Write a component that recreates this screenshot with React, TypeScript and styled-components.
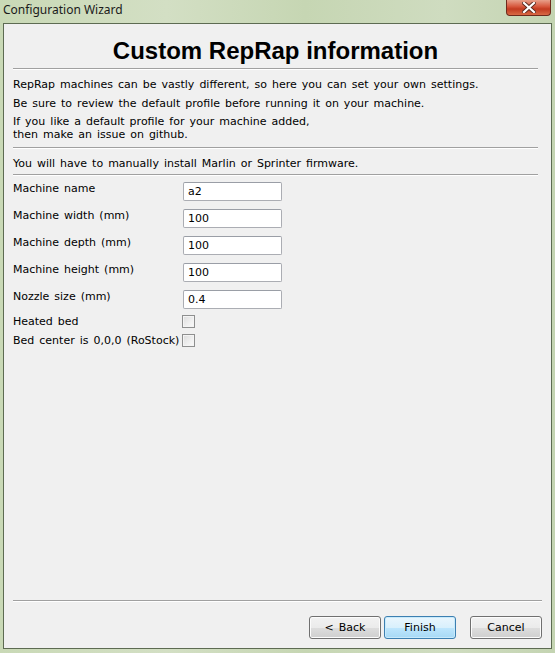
import React from 'react';
import styled, { createGlobalStyle } from 'styled-components';

const GlobalStyle = createGlobalStyle`
  html, body {
    margin: 0;
    padding: 0;
    width: 555px;
    height: 653px;
    overflow: hidden;
  }
  #root {
    width: 555px;
    height: 653px;
  }
`;

const uiFont = `"DejaVu Sans", Tahoma, sans-serif`;

const Window = styled.div`
  display: flex;
  flex-direction: column;
  width: 555px;
  height: 653px;
  box-sizing: border-box;
  background: linear-gradient(90deg, #c9d9b6 0%, #d3dfc4 30%, #c6d6b3 55%, #cfdcc0 80%, #c4d4b2 100%);
`;

const TitleBar = styled.div`
  display: flex;
  align-items: flex-start;
  justify-content: space-between;
  height: 23px;
  padding-left: 3px;
  flex-shrink: 0;
`;

const TitleText = styled.span`
  font-family: "Noto Sans", "Open Sans", sans-serif;
  font-size: 12px;
  line-height: 20px;
  color: #1a1a1a;
`;

const CloseButton = styled.div`
  display: flex;
  align-items: center;
  justify-content: center;
  width: 45px;
  height: 16px;
  margin-right: 4px;
  border: 1px solid #6e2a1c;
  border-top: none;
  border-radius: 0 0 4px 4px;
  background: linear-gradient(180deg, #e8a08a 0%, #d6553a 45%, #c23b20 60%, #d86a45 100%);
  box-sizing: border-box;
`;

const Client = styled.div`
  flex: 1;
  display: flex;
  flex-direction: column;
  margin: 0 3px 4px 3px;
  border: 1px solid #5d6b52;
  background: #f0f0f0;
  font-family: ${uiFont};
  font-size: 11px;
  word-spacing: 1.5px;
  color: #000;
`;

const Content = styled.div`
  flex: 1;
  display: flex;
  flex-direction: column;
  padding: 0 13px 0 9px;
`;

const Heading = styled.h1`
  margin: 0;
  padding-top: 12px;
  height: 32px;
  text-align: center;
  font-family: "Liberation Sans", Arial, sans-serif;
  font-weight: bold;
  font-size: 24px;
  line-height: 30px;
  word-spacing: normal;
`;

const Separator = styled.div<{ $space?: number }>`
  height: 0;
  border-top: 1px solid #a0a0a0;
  border-bottom: 1px solid #ffffff;
  margin: ${(p) => p.$space ?? 4}px 0;
`;

const Para = styled.p<{ $top?: number }>`
  margin: ${(p) => p.$top ?? 0}px 0 0 0;
  line-height: 13px;
  white-space: nowrap;
`;

const Form = styled.div`
  display: flex;
  flex-direction: column;
  padding-top: 2px;
`;

const FieldRow = styled.div<{ $gap: number }>`
  display: grid;
  grid-template-columns: 170px 99px;
  align-items: start;
  margin-bottom: ${(p) => p.$gap}px;
`;

const Label = styled.label`
  line-height: 13px;
  white-space: nowrap;
`;

const TextBox = styled.input`
  box-sizing: border-box;
  width: 99px;
  height: 19px;
  margin: 0;
  padding: 0 4px;
  border: 1px solid #abadb3;
  border-top-color: #9a9ea6;
  border-radius: 2px;
  background: #ffffff;
  font-family: ${uiFont};
  font-size: 11px;
  color: #000;
  outline: none;
`;

const CheckBox = styled.span`
  display: block;
  box-sizing: border-box;
  width: 13px;
  height: 13px;
  margin-left: -1px;
  border: 1px solid #8e8f8f;
  background: linear-gradient(135deg, #dcdcdc 0%, #f0f0f0 60%, #fafafa 100%);
  box-shadow: inset 0 0 0 1px #f4f4f4;
`;

const Footer = styled.div`
  display: flex;
  flex-direction: column;
  padding: 0 9px 9px 9px;
`;

const ButtonRow = styled.div`
  display: flex;
  justify-content: flex-end;
  padding-top: 14px;
`;

const Button = styled.button<{ $primary?: boolean; $gap?: number }>`
  box-sizing: border-box;
  width: 72px;
  height: 23px;
  margin-left: ${(p) => p.$gap ?? 0}px;
  padding: 0;
  border: 1px solid ${(p) => (p.$primary ? '#3c7fb1' : '#707070')};
  border-radius: 3px;
  background: ${(p) =>
    p.$primary
      ? 'linear-gradient(180deg, #eaf6fd 0%, #d9f0fc 50%, #bee6fd 51%, #a7d9f5 100%)'
      : 'linear-gradient(180deg, #f2f2f2 0%, #ebebeb 50%, #dddddd 51%, #cfcfcf 100%)'};
  box-shadow: inset 0 0 0 1px ${(p) => (p.$primary ? '#c8eafb' : '#fcfcfc')};
  font-family: ${uiFont};
  font-size: 11px;
  word-spacing: 1.5px;
  color: #000;
`;

const fields = [
  { label: 'Machine name', value: 'a2' },
  { label: 'Machine width (mm)', value: '100' },
  { label: 'Machine depth (mm)', value: '100' },
  { label: 'Machine height (mm)', value: '100' },
  { label: 'Nozzle size (mm)', value: '0.4' },
];

const checks = ['Heated bed', 'Bed center is 0,0,0 (RoStock)'];

const App: React.FC = () => (
  <>
    <GlobalStyle />
    <Window>
      <TitleBar>
        <TitleText>Configuration Wizard</TitleText>
        <CloseButton>
          <svg width="14" height="11" viewBox="0 0 14 11">
            <path d="M2 1 L12 10 M12 1 L2 10" stroke="#5a2a20" strokeWidth="4" strokeLinecap="square" />
            <path d="M2 1 L12 10 M12 1 L2 10" stroke="#ffffff" strokeWidth="2.2" strokeLinecap="square" />
          </svg>
        </CloseButton>
      </TitleBar>
      <Client>
        <Content>
          <Heading>Custom RepRap information</Heading>
          <Separator $space={0} />
          <Para $top={8}>RepRap machines can be vastly different, so here you can set your own settings.</Para>
          <Para $top={6}>Be sure to review the default profile before running it on your machine.</Para>
          <Para $top={5}>
            If you like a default profile for your machine added,
            <br />
            then make an issue on github.
          </Para>
          <Separator $space={6} />
          <Para $top={2}>You will have to manually install Marlin or Sprinter firmware.</Para>
          <Separator $space={4} />
          <Form>
            {fields.map((f, i) => (
              <FieldRow key={f.label} $gap={i === fields.length - 1 ? 6 : 8}>
                <Label>{f.label}</Label>
                <TextBox defaultValue={f.value} />
              </FieldRow>
            ))}
            {checks.map((c) => (
              <FieldRow key={c} $gap={6}>
                <Label>{c}</Label>
                <CheckBox />
              </FieldRow>
            ))}
          </Form>
        </Content>
        <Footer>
          <Separator $space={0} />
          <ButtonRow>
            <Button>&lt; Back</Button>
            <Button $primary $gap={3}>Finish</Button>
            <Button $gap={14}>Cancel</Button>
          </ButtonRow>
        </Footer>
      </Client>
    </Window>
  </>
);

export default App;
